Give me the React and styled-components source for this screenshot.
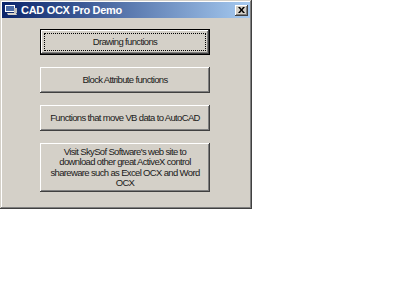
import React from 'react';
import styled, { createGlobalStyle } from 'styled-components';

const GlobalStyle = createGlobalStyle`
body { margin:0; background:#fff; }
`

const Window = styled.div`
width:252px; height:209px; box-sizing:border-box; padding:2px;
background:#d4d0c8;
box-shadow: inset -1px -1px #404040, inset 1px 1px #d4d0c8,
    inset -2px -2px #808080, inset 2px 2px #fff;
display:flex; flex-direction:column;
`
const TitleBar = styled.div`
height:16px; display:flex; align-items:center; padding:0 2px 0 2px;
background:linear-gradient(to right, #0a246a, #a6caf0);
color:#fff; font:bold 11px "Liberation Sans", Arial, sans-serif;
`
const TitleIcon = styled.svg`
width:14px; height:12px; margin-right:3px; flex:none;
`
const Title = styled.span`
letter-spacing:-0.3px;
`
const CloseButton = styled.div`
margin-left:auto; width:13px; height:11px; box-sizing:border-box;
background:#d4d0c8; display:flex; align-items:center; justify-content:center;
box-shadow: inset -1px -1px #404040, inset 1px 1px #fff, inset -2px -2px #808080;
`
const Body = styled.div`
display:flex; flex-direction:column; gap:12px;
padding:11px 0 0 38px;
`
const Button = styled.div`
position:relative;
width:170px; height:${p => p.$tall ? '49px' : '26px'}; box-sizing:border-box;
display:flex; align-items:center; justify-content:center; text-align:center;
padding:${p => p.$tall ? '0 9px' : '0 5px'};
background:#d4d0c8; color:#1a1a1a;
font:9.5px/10.3px "Liberation Sans", Arial, sans-serif;
letter-spacing:-0.65px;
box-shadow: ${p => p.$default
    ? 'inset 0 0 0 1px #000, inset -2px -2px #404040, inset 2px 2px #fff, inset -3px -3px #808080'
    : 'inset -1px -1px #404040, inset 1px 1px #fff, inset -2px -2px #808080'};
&::after {
    content:''; display:${p => p.$default ? 'block' : 'none'};
    position:absolute; inset:4px; border:1px dotted #000;
}
`

const App = () => {
    return (
        <>
            <GlobalStyle />
            <Window>
                <TitleBar>
                    <TitleIcon viewBox="0 0 14 12">
                        <rect x="1" y="1" width="10" height="7" fill="#fff" />
                        <rect x="2" y="2" width="8" height="5" fill="#4a6aa5" />
                        <path d="M3 9h9l1 2H4z" fill="#d4d0c8" />
                        <rect x="10" y="4" width="3" height="5" fill="#c0c0c0" />
                    </TitleIcon>
                    <Title>CAD OCX Pro Demo</Title>
                    <CloseButton>
                        <svg width="7" height="6" viewBox="0 0 7 6">
                            <path d="M0 0h2l1.5 2 1.5-2h2L4.5 3 7 6H5L3.5 4 2 6H0l2.5-3z" fill="#000" />
                        </svg>
                    </CloseButton>
                </TitleBar>
                <Body>
                    <Button $default>Drawing functions</Button>
                    <Button>Block Attribute functions</Button>
                    <Button>Functions that move VB data to AutoCAD</Button>
                    <Button $tall>
                        Visit SkySof Software's web site to download other great ActiveX control shareware such as Excel OCX and Word OCX
                    </Button>
                </Body>
            </Window>
        </>
    );
};

export default App;
